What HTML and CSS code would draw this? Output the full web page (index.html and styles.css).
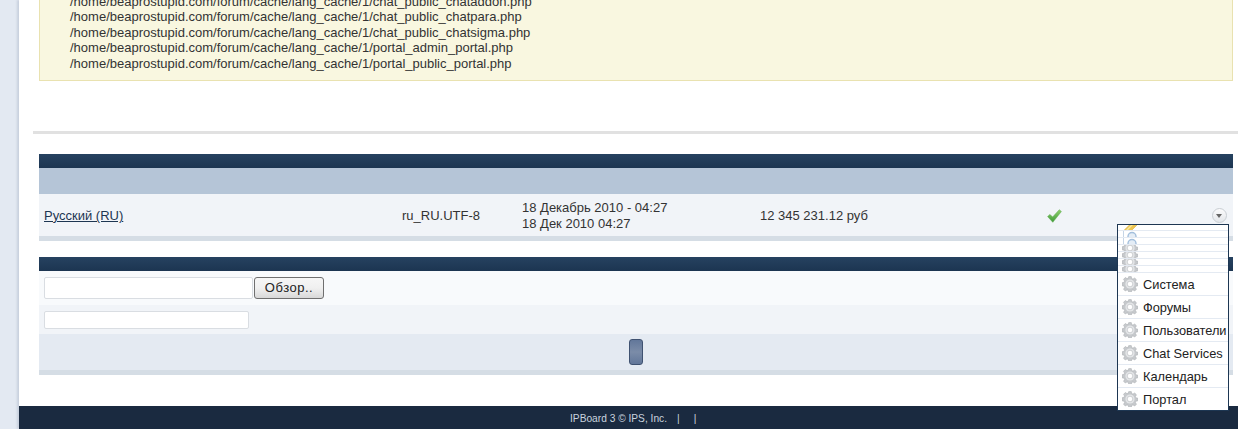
FILE: index.html
```html
<!DOCTYPE html>
<html lang="ru">
<head>
<meta charset="UTF-8">
<title>Языки</title>
<link rel="stylesheet" href="styles.css">
</head>
<body>
<svg class="icon-defs" xmlns="http://www.w3.org/2000/svg">
  <symbol id="gear" viewBox="0 0 16 16">
    <path fill="#c6c9cc" stroke="#a6abaf" stroke-width=".5" d="M6.700 .6h2.600l.4 2 1.300.5 1.700-1.100 1.800 1.800-1.100 1.700.5 1.300 2 .4v2.600l-2 .4-.5 1.300 1.100 1.700-1.800 1.800-1.700-1.100-1.300.5-.4 2H6.700l-.4-2-1.300-.5-1.700 1.100-1.800-1.800 1.100-1.700-.5-1.300-2-.4V6.700l2-.4.5-1.300-1.100-1.700 1.800-1.800 1.700 1.100 1.300-.5z"/>
    <circle cx="8" cy="8" r="4.600" fill="#e4e6e8"/>
    <circle cx="8" cy="8" r="2.800" fill="#fff" stroke="#b3b7bb" stroke-width=".6"/>
  </symbol>
  <symbol id="pencil" viewBox="0 0 16 16">
    <path fill="#efc650" stroke="#d8ae3c" stroke-width=".6" d="M.8 11.500 11 1.500l4 3.500-10 10-4.600.6z"/>
    <path fill="#fae9a0" d="M3.500 10.500 11.500 2.500l1 1-8 8z"/>
  </symbol>
  <symbol id="doc" viewBox="0 0 16 16">
    <path fill="#fff" d="M1.500 .5h13v15h-13z"/>
    <path fill="none" stroke="#c5d5e6" d="M1.500 0v16"/>
    <circle cx="10" cy="10.500" r="4" fill="#e4edf6" stroke="#a3bfdc" stroke-width="1.400"/>
  </symbol>
</svg>

<div class="page">
  <div class="message">
    <div>/home/beaprostupid.com/forum/cache/lang_cache/1/chat_public_chataddon.php</div>
    <div>/home/beaprostupid.com/forum/cache/lang_cache/1/chat_public_chatpara.php</div>
    <div>/home/beaprostupid.com/forum/cache/lang_cache/1/chat_public_chatsigma.php</div>
    <div>/home/beaprostupid.com/forum/cache/lang_cache/1/portal_admin_portal.php</div>
    <div>/home/beaprostupid.com/forum/cache/lang_cache/1/portal_public_portal.php</div>
  </div>

  <div class="divider"></div>

  <div class="table lang-table">
    <div class="table-head"></div>
    <div class="table-subhead"></div>
    <div class="lang-row">
      <div><a href="#" class="lang-link">Русский (RU)</a></div>
      <div>ru_RU.UTF-8</div>
      <div>18 Декабрь 2010 - 04:27<br>18 Дек 2010 04:27</div>
      <div>12 345 231.12 руб</div>
      <div class="lang-check">
        <svg width="15" height="14" viewBox="0 0 15 14">
          <defs>
            <linearGradient id="check-fill" x1="0" y1="0" x2="0" y2="1">
              <stop offset="0" stop-color="#8fd06c"/>
              <stop offset="1" stop-color="#3f9a3a"/>
            </linearGradient>
          </defs>
          <path fill="url(#check-fill)" stroke="#5aa84a" stroke-width=".5" d="M.6 7.500 3 5.400 5.600 8 12.300 .7 14.400 2.500 5.800 13.300z"/>
        </svg>
      </div>
      <div class="lang-actions"><span class="drop-btn"></span></div>
    </div>
    <div class="table-foot"></div>
  </div>

  <div class="table import-table">
    <div class="table-head"></div>
    <div class="form-row form-row-file">
      <input type="text" class="file-input"><button type="button" class="file-btn">Обзор..</button>
    </div>
    <div class="form-row form-row-name">
      <input type="text" class="name-input">
    </div>
    <div class="submit-row"><button type="button" class="submit-btn"></button></div>
    <div class="table-foot"></div>
  </div>

  <div class="footer">IPBoard 3 © IPS, Inc.<span class="sep">|</span><span class="sep">|</span></div>
</div>

<ul class="menu">
  <li class="menu-tiny"><svg class="menu-icon"><use href="#pencil"/></svg></li>
  <li class="menu-tiny"><svg class="menu-icon"><use href="#doc"/></svg></li>
  <li class="menu-tiny"><svg class="menu-icon"><use href="#doc"/></svg></li>
  <li class="menu-tiny"><svg class="menu-icon"><use href="#gear"/></svg></li>
  <li class="menu-tiny"><svg class="menu-icon"><use href="#gear"/></svg></li>
  <li class="menu-tiny"><svg class="menu-icon"><use href="#gear"/></svg></li>
  <li class="menu-tiny"><svg class="menu-icon"><use href="#gear"/></svg></li>
  <li><svg class="menu-icon"><use href="#gear"/></svg>Система</li>
  <li><svg class="menu-icon"><use href="#gear"/></svg>Форумы</li>
  <li><svg class="menu-icon"><use href="#gear"/></svg>Пользователи</li>
  <li><svg class="menu-icon"><use href="#gear"/></svg>Chat Services</li>
  <li><svg class="menu-icon"><use href="#gear"/></svg>Календарь</li>
  <li><svg class="menu-icon"><use href="#gear"/></svg>Портал</li>
</ul>
</body>
</html>
```

FILE: styles.css
```css
html, body {
  margin: 0;
  height: 429px;
  overflow: hidden;
}
body {
  position: relative;
  background: #e3e9f2;
  font-family: 'Liberation Sans', Arial, sans-serif;
  font-size: 13px;
  color: #333;
}
.icon-defs {
  display: none;
}
.page {
  margin-left: 19px;
  height: 429px;
  background: #fff;
  box-shadow: -2px 0 2px rgba(120, 135, 160, 0.25);
  overflow: hidden;
}

/* message box, scrolled past its top */
.message {
  margin: -8px 5px 0 20px;
  padding: 0.6px 0 8.4px 30px;
  background: #f9f7e0;
  border: 1px solid #e9e2b0;
  line-height: 15.6px;
}

.divider {
  height: 3px;
  margin: 50px 0 20px 14px;
  background: #e1e1e1;
}

.table {
  margin: 0 5px 0 20px;
}
.table-head {
  height: 14px;
  background: linear-gradient(#264260, #1c3551);
}
.table-subhead {
  height: 26px;
  background: #b5c5d7;
}
.table-foot {
  height: 5px;
  background: #d5dde5;
}

.lang-row {
  display: grid;
  grid-template-columns: 358px 120px 238px 287px 60px 1fr;
  align-items: center;
  height: 40px;
  padding: 2px 6px 0 5px;
  background: #f1f4f8;
  line-height: 16px;
}
.lang-link {
  color: #1d3652;
}
.lang-check {
  display: flex;
}
.lang-actions {
  display: flex;
  justify-content: flex-end;
}
.drop-btn {
  display: block;
  position: relative;
  width: 13px;
  height: 13px;
  border: 1px solid #c9ced3;
  border-radius: 50%;
  background: linear-gradient(#fbfbfc, #e3e6ea);
}
.drop-btn::after {
  content: "";
  position: absolute;
  left: 3px;
  top: 5px;
  border: 3.5px solid transparent;
  border-top: 4px solid #666;
  border-bottom: 0;
}

.import-table {
  margin-top: 16px;
}
.form-row {
  display: flex;
  padding-left: 5px;
}
.form-row-file {
  height: 34px;
  padding-top: 6px;
  box-sizing: border-box;
  background: #f8fafc;
}
.form-row-name {
  height: 29px;
  padding-top: 6px;
  box-sizing: border-box;
  background: #f1f4f8;
}
.file-input,
.name-input {
  box-sizing: border-box;
  margin: 0;
  padding: 0 3px;
  background: #fff;
  border: 1px solid #d9dde2;
  border-radius: 2px;
  outline: none;
}
.file-input {
  width: 209px;
  height: 22px;
}
.name-input {
  width: 205px;
  height: 18px;
}
.file-btn {
  box-sizing: border-box;
  width: 70px;
  height: 22px;
  margin: 0 0 0 1px;
  padding: 0;
  border: 1px solid #6f6f6f;
  border-radius: 3px;
  background: linear-gradient(#f6f6f6, #f0f0f0 50%, #d8d8d8);
  font-family: 'Liberation Sans', Arial, sans-serif;
  font-size: 13px;
  letter-spacing: 0.5px;
  color: #222;
}
.submit-row {
  display: flex;
  justify-content: center;
  align-items: center;
  height: 36px;
  background: #e4eaf2;
}
.submit-btn {
  box-sizing: border-box;
  width: 14px;
  height: 26px;
  padding: 0;
  border: 1px solid #3f5271;
  border-radius: 3px;
  background: linear-gradient(#62779a, #7b8ca8 50%, #62779a);
}

.footer {
  height: 23px;
  margin-top: 31px;
  padding-left: 551px;
  background: #1a2a40;
  color: #c9d3df;
  font-size: 10.2px;
  line-height: 26px;
}
.sep {
  margin-left: 10px;
}
.sep + .sep {
  margin-left: 14px;
}

/* dropdown over the table */
.menu {
  position: absolute;
  left: 1117px;
  top: 224px;
  width: 110px;
  margin: 0;
  padding: 0;
  list-style: none;
  background: #fff;
  border: 1px solid #1d3652;
  font-size: 12.8px;
  color: #222;
}
.menu li {
  display: flex;
  align-items: center;
  gap: 5px;
  box-sizing: border-box;
  height: 23px;
  padding-left: 4px;
  border-bottom: 1px solid #e4eaf2;
  overflow: hidden;
  white-space: nowrap;
}
.menu li:last-child {
  height: 22px;
  border-bottom: 0;
}
.menu li.menu-tiny {
  height: 7px;
}
.menu li.menu-tiny:first-child {
  height: 6px;
}
.menu-icon {
  flex: none;
  width: 16px;
  height: 16px;
}
```
